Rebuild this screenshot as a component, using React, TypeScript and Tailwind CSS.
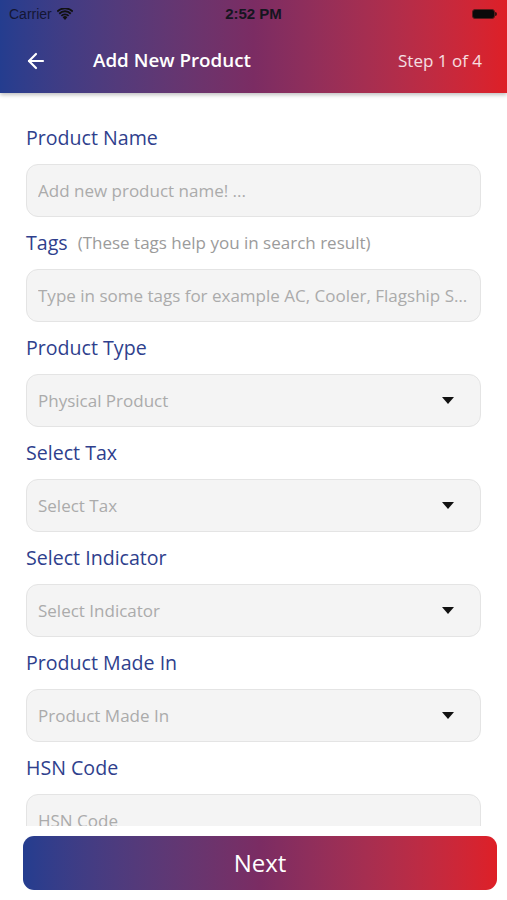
import { ArrowLeft } from "lucide-react";

const font = { fontFamily: '"Open Sans", "Noto Sans", sans-serif' };

interface FieldProps {
  label: string;
  hint?: string;
  placeholder: string;
  dropdown?: boolean;
}

function Field({ label, hint, placeholder, dropdown }: FieldProps) {
  return (
    <div className="mb-[13px]">
      <div className="flex items-center h-[26px] mb-[13px]">
        <span className="text-[19.6px] text-[#2f3f8d] leading-[26px]">{label}</span>
        {hint && <span className="ml-[10px] text-[17px] text-[#9b9b9b]">{hint}</span>}
      </div>
      <div
        className={`h-[53px] rounded-[12px] bg-[#f4f4f4] border border-[#e4e4e4] flex items-center pl-[11px] ${dropdown ? 'pr-[26px]' : 'pr-[1px]'}`}
      >
        <span className="flex-1 text-[17px] text-[#ababab] truncate">{placeholder}</span>
        {dropdown && (
          <svg width="12" height="7" viewBox="0 0 12 7" aria-hidden="true">
            <path d="M0 0h12L6 7z" fill="#111" />
          </svg>
        )}
      </div>
    </div>
  );
}

export default function App() {
  return (
    <div className="h-[900px] w-full flex flex-col bg-white overflow-hidden" style={font}>
      <div className="h-[93px] bg-gradient-to-r from-[#243d8f] via-[#7b2c63] to-[#de1f26] shadow-[0_2px_4px_rgba(0,0,0,0.25)] relative z-10 shrink-0">
        <div className="h-[28px] flex items-center justify-between px-[9px]">
          <div className="flex items-center gap-[5px] w-[120px]">
            <span className="text-[14px] text-[#141633]" style={{ fontFamily: '"Liberation Sans", sans-serif' }}>Carrier</span>
            <svg width="16" height="12" viewBox="0 0 16 12" aria-hidden="true">
              <path d="M8 12 5.6 9.2a3.4 3.4 0 0 1 4.8 0z" fill="#111" />
              <path d="M3.7 7.2a6 6 0 0 1 8.6 0l-1.3 1.4a4.2 4.2 0 0 0-6 0z" fill="#111" />
              <path d="M1.6 5a9 9 0 0 1 12.8 0l-1.3 1.4a7.2 7.2 0 0 0-10.2 0z" fill="#111" />
              <path d="M-0.4 2.9a12 12 0 0 1 16.8 0l-1.2 1.3a10.2 10.2 0 0 0-14.4 0z" fill="#111" />
            </svg>
          </div>
          <span className="text-[15px] font-bold text-[#151520]" style={{ fontFamily: '"Liberation Sans", sans-serif' }}>2:52 PM</span>
          <div className="w-[120px] flex justify-end pr-[1px]">
            <div className="flex items-center">
              <div className="w-[23px] h-[10px] rounded-[3px] bg-[#0a0a0a] border border-[#5a1a1a]" />
              <div className="w-[2px] h-[4px] bg-[#3a1010] rounded-r-sm" />
            </div>
          </div>
        </div>
        <div className="h-[65px] flex items-center pl-[24px] pr-[25px]">
          <ArrowLeft className="w-[24px] h-[24px] text-white" strokeWidth={2.2} />
          <span className="ml-[45px] text-[18.8px] font-semibold text-white">Add New Product</span>
          <span className="ml-auto text-[17px] text-white/85">Step 1 of 4</span>
        </div>
      </div>

      <div className="flex-1 overflow-hidden px-[26px] pt-[32px] min-h-0">
        <Field label="Product Name" placeholder="Add new product name! ..." />
        <Field
          label="Tags"
          hint="(These tags help you in search result)"
          placeholder="Type in some tags for example AC, Cooler, Flagship Smartphone"
        />
        <Field label="Product Type" placeholder="Physical Product" dropdown />
        <Field label="Select Tax" placeholder="Select Tax" dropdown />
        <Field label="Select Indicator" placeholder="Select Indicator" dropdown />
        <Field label="Product Made In" placeholder="Product Made In" dropdown />
        <Field label="HSN Code" placeholder="HSN Code" />
      </div>

      <div className="h-[74px] shrink-0 px-[23px] pt-[10px] pb-[10px] bg-white">
        <button
          type="button"
          className="w-[474px] h-[54px] rounded-[11px] bg-gradient-to-r from-[#243d8f] via-[#7b2c63] to-[#de1f26] text-white text-[24px] flex items-center justify-center"
        >
          Next
        </button>
      </div>
    </div>
  );
}
